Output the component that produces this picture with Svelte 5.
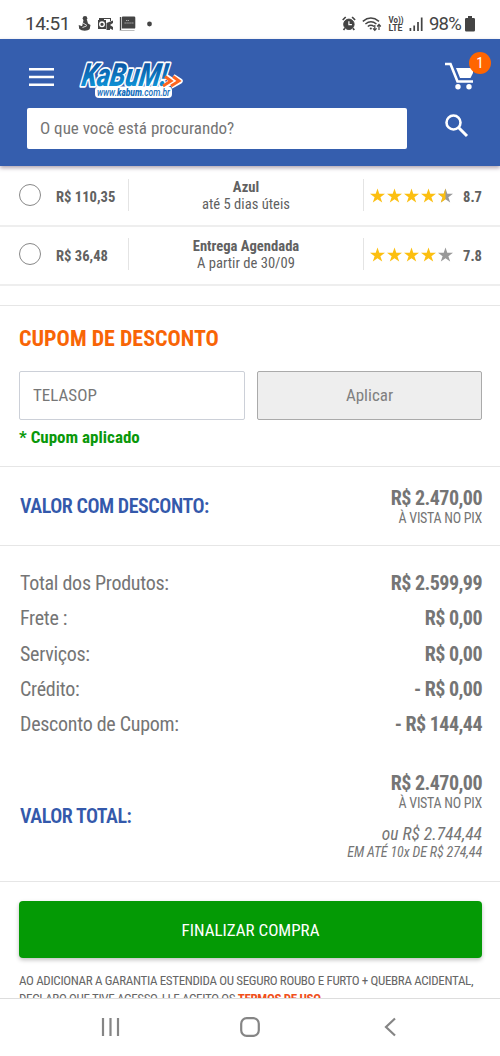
<!-- Carrinho: resumo do pedido no celular -->
<script>
    let search = $state('');
    let coupon = $state('TELASOP');

    // opções de frete visíveis na lista
    const shipping = [
        { price: 'R$ 110,35', name: 'Azul', info: 'até 5 dias úteis', stars: 4.5, score: '8.7' },
        { price: 'R$ 36,48', name: 'Entrega Agendada', info: 'A partir de 30/09', stars: 4, score: '7.8' }
    ];

    const totals = [
        { label: 'Total dos Produtos:', value: 'R$ 2.599,99' },
        { label: 'Frete :', value: 'R$ 0,00' },
        { label: 'Serviços:', value: 'R$ 0,00' },
        { label: 'Crédito:', value: '- R$ 0,00' },
        { label: 'Desconto de Cupom:', value: '- R$ 144,44' }
    ];

    const star = 'M8 0l1.9 5.7H16l-4.9 3.6L13 15l-5-3.6L3 15l1.9-5.7L0 5.7h6.1z';
</script>

<div class="screen">
    <div class="status">
        <span class="clock">14:51</span>
        <svg class="s-left" width="76" height="18" viewBox="0 0 76 18" fill="#444">
            <circle cx="7" cy="3.2" r="2.3" />
            <path d="M5.5 5H9l1 3.500 2.500 1.500-.8 4c-2 2.300-8 2.400-10.500-.2L.7 10l3.400 1.300z" />
            <path d="M5 8l4 2.500M4.500 12.500l4-1.500" stroke="#fff" stroke-width=".8" />
            <path d="M21 3h12v3h-1V4h-6v1h-5zM20 5h8v9h-8z" />
            <circle cx="24" cy="9.300" r="2.300" fill="none" stroke="#fff" stroke-width="1.300" />
            <path d="M28.500 8l6.500-2.500V8l-3 2 3 2v3l-3-1.500V15h-3.500z" />
            <path d="M42.500 2v14" stroke="#444" stroke-width="1.300" />
            <path d="M45 1.500h11q1.300 0 1.300 1.300v9.600q0 1.200-1.300 1.200H43.800V2.700q0-1.200 1.200-1.200z" />
            <path d="M42 15.500h14.500" stroke="#bbb" stroke-width="1" />
            <path d="M48 5.500h3M46.500 8h9" stroke="#aaa" stroke-width="1" stroke-dasharray="1.400 .5" />
            <circle cx="71.500" cy="9" r="2.400" />
        </svg>
        <svg class="s-right" width="82" height="18" viewBox="0 0 82 18" fill="none" stroke="#444">
            <circle cx="6.900" cy="9.300" r="5.200" fill="#444" />
            <path d="M6.900 6.300v3.400h3" stroke="#fff" stroke-width="1.200" />
            <path d="M.7 5L3.700 2M10.100 2l3 3M2.900 13.200L1.500 15M10.900 13.200l1.400 1.800" stroke-width="1.700" />
            <path d="M20.800 6.300q8-6.500 16.200 0M23.400 9q5.600-4.400 11 0M25.800 11.500q3.100-2.500 6.200 0" stroke-width="1.500" />
            <circle cx="28.800" cy="13.500" r="1.100" fill="#444" stroke="none" />
            <path d="M32.800 10v5M31 13.300l1.800 2 1.800-2M37 15v-5M35.200 11.500l1.800-2 1.800 2" stroke-width="1.200" />
            <g class="volte">
                <text x="46.500" y="7.500" textLength="15" lengthAdjust="spacingAndGlyphs">Vo))</text>
                <text x="46.500" y="16" textLength="14" lengthAdjust="spacingAndGlyphs">LTE</text>
            </g>
            <path d="M68.400 13v3M72.200 10.500V16M76 7v9M79.700 2.500V16" stroke-width="1.700" />
        </svg>
        <span class="percent">98%</span>
        <svg class="batt" width="10" height="16" viewBox="0 0 10 16" fill="#444">
            <path d="M3 0h4v2h1.700Q10 2 10 3.300v10.900q0 1.300-1.300 1.300H1.300Q0 15.500 0 14.200V3.300Q0 2 1.300 2H3z" />
        </svg>
    </div>

    <header>
        <div class="brand">
            <button class="icon" aria-label="Menu">
                <svg width="25" height="20" viewBox="0 0 25 20" stroke="#fff" stroke-width="2.600">
                    <path d="M0 2.300h25M0 10h25M0 17.700h25" />
                </svg>
            </button>
            <svg class="logo" width="108" height="42" viewBox="0 0 108 42">
                <defs>
                    <linearGradient id="ink" x1="0" y1="0" x2="0" y2="1">
                        <stop offset="0.2" stop-color="#0a55a4" />
                        <stop offset="0.9" stop-color="#109bdd" />
                    </linearGradient>
                </defs>
                <rect x="17" y="28.500" width="77" height="11.500" rx="4" fill="#fff" />
                <path d="M88 18.500l7 4.500-9 5M95 18.500l7 4.500-9 5" fill="none" stroke="#fff" stroke-width="5.500" stroke-linejoin="round" />
                <text class="wordmark" transform="skewX(-9)" x="7" y="27.500" textLength="85" lengthAdjust="spacingAndGlyphs" fill="url(#ink)">KaBuM!</text>
                <path d="M87 18.500l6 4.500-8 5M95 18.500l6 4.500-8 5" fill="none" stroke="#ff641e" stroke-width="3" />
                <text class="site" x="19" y="37.500" textLength="73" lengthAdjust="spacingAndGlyphs">www.<tspan font-weight="900">kabum</tspan>.com.br</text>
            </svg>
            <button class="icon cart" aria-label="Carrinho">
                <svg width="29" height="28" viewBox="0 0 29 28" fill="#fff">
                    <path d="M0 2h5.500l7 17.500H28" fill="none" stroke="#fff" stroke-width="2.600" />
                    <path d="M11 6h17v5l-2.500 5H15z" />
                    <circle cx="13" cy="24.800" r="2.700" />
                    <circle cx="24" cy="24.800" r="2.700" />
                </svg>
                <span class="badge">1</span>
            </button>
        </div>
        <div class="search">
            <input placeholder="O que você está procurando?" bind:value={search} />
            <button class="icon" aria-label="Buscar">
                <svg width="24" height="24" viewBox="0 0 24 24" fill="none" stroke="#fff" stroke-width="2.600">
                    <circle cx="8.500" cy="8.500" r="7" />
                    <path d="M13.500 13.500l8.500 8.500" stroke-width="3" />
                </svg>
            </button>
        </div>
    </header>

    <main>
        {#each shipping as option}
            <label class="option">
                <input type="radio" name="frete" />
                <b class="price">{option.price}</b>
                <span class="carrier"><b>{option.name}</b><br />{option.info}</span>
                <span class="stars">
                    {#each Array(5) as _, i}
                        <svg width="15" height="15" viewBox="0 0 16 15">
                            <path d={star} fill={i < Math.floor(option.stars) ? '#fcbf10' : '#999'} />
                            {#if option.stars - i === 0.5}
                                <path d="M8 0v11.400L3 15l1.900-5.700L0 5.700h6.100z" fill="#fcbf10" />
                            {/if}
                        </svg>
                    {/each}
                </span>
                <b class="score">{option.score}</b>
            </label>
        {/each}

        <section class="coupon">
            <h2>CUPOM DE DESCONTO</h2>
            <div class="fields">
                <input bind:value={coupon} />
                <button>Aplicar</button>
            </div>
            <p class="applied">* Cupom aplicado</p>
        </section>

        <section class="discount">
            <h3>VALOR COM DESCONTO:</h3>
            <div class="amount">
                <b>R$ 2.470,00</b>
                <small>À VISTA NO PIX</small>
            </div>
        </section>

        <section class="summary">
            {#each totals as row}
                <div class="row"><span>{row.label}</span><b>{row.value}</b></div>
            {/each}
            <div class="grand">
                <h3>VALOR TOTAL:</h3>
                <div class="amount">
                    <b>R$ 2.470,00</b>
                    <small>À VISTA NO PIX</small>
                    <i class="or">ou R$ 2.744,44</i>
                    <i class="parts">EM ATÉ 10x DE R$ 274,44</i>
                </div>
            </div>
        </section>

        <section class="checkout">
            <button>FINALIZAR COMPRA</button>
            <p>AO ADICIONAR A GARANTIA ESTENDIDA OU SEGURO ROUBO E FURTO + QUEBRA ACIDENTAL,<br />DECLARO QUE TIVE ACESSO, LI E ACEITO OS <b>TERMOS DE USO</b></p>
        </section>
    </main>

    <!-- barra de navegação do Android -->
    <nav>
        <svg width="20" height="20" viewBox="0 0 20 20"><path d="M3 1v18M10.500 1v18M18 1v18" /></svg>
        <svg width="20" height="20" viewBox="0 0 20 20"><rect x="1.200" y="1.200" width="17.600" height="17.600" rx="5.500" /></svg>
        <svg width="20" height="20" viewBox="0 0 20 20"><path d="M15 1.500L6 10l9 8.500" /></svg>
    </nav>
</div>

<style>
:global(body) { margin: 0; }
* { box-sizing: border-box; }
.screen {
    width: 500px; height: 1056px; overflow: hidden;
    display: flex; flex-direction: column; background: #fff;
    font-family: "Roboto Condensed", Roboto, sans-serif; font-stretch: 75%;
    color: #757575;
}
button, input { font: inherit; font-stretch: inherit; color: inherit; margin: 0; }
h2, h3, p { margin: 0; }
svg { display: block; flex: none; }

/* barra de status */
.status {
    flex: none; height: 39px; padding: 8px 0 0 25px;
    display: flex; align-items: flex-start;
    font-family: Roboto, sans-serif; font-stretch: normal; color: #444;
}
.clock { width: 53px; font-size: 19px; line-height: 32px; letter-spacing: -.5px; }
.s-left { margin-top: 7px; }
.s-right { margin: 7px 0 0 188px; }
.volte { fill: #444; stroke: none; font-size: 9px; font-weight: 700; }
.percent { width: 36px; margin-left: 5px; font-size: 18.5px; line-height: 32px; letter-spacing: -.8px; }
.batt { margin-top: 8px; }

header {
    flex: none; height: 127px; background: #355eae; position: relative;
    padding: 17px 23px 0 27px; box-shadow: 0 2px 4px rgba(60, 30, 60, .4);
}
.icon { border: 0; padding: 0; background: none; }
.brand { display: flex; height: 52px; }
.brand > .icon { align-self: flex-start; margin: 11px 0 0 2px; }
.logo { margin: 2px 0 0 24px; }
/* contorno branco por baixo das letras */
.wordmark {
    font: italic 900 32px Roboto, sans-serif;
    stroke: #fff; stroke-width: 3.6px; stroke-linejoin: round; paint-order: stroke;
}
.site { font: italic 500 10px Roboto, sans-serif; fill: #1670bd; }
.brand > .cart { position: relative; margin: 6px 0 0 auto; padding-right: 3px; }
.badge {
    position: absolute; top: -10px; right: -14px;
    width: 22px; height: 22px; border-radius: 50%;
    background: #ff6500; color: #fff; font-size: 15px; line-height: 22px;
}
.search { display: flex; align-items: flex-start; }
.search input {
    width: 380px; height: 41px; padding: 0 13px 1px;
    border: 0; border-radius: 2px; background: #fff; font-size: 17px;
}
.search input::placeholder { color: #757575; opacity: 1; }
.search .icon { margin: 6px 0 0 38px; }

main { flex: 1; min-height: 0; overflow: hidden; }
.option {
    height: 58.5px; padding: 0 18px 2px 19px;
    display: flex; align-items: center;
    border-bottom: 2px solid #eee; font-size: 14.6px; color: #616161;
}
.option:first-child { height: 61px; padding-top: 1px; }
.option input {
    appearance: none; width: 22px; height: 22px; flex: none;
    border: 1px solid #888; border-radius: 50%; background: #fff;
}
.price { width: 73px; margin-left: 15px; padding-top: 4px; white-space: nowrap; }
.carrier {
    width: 236px; height: 32px; line-height: 17px; text-align: center;
    border: solid #e4e4e4; border-width: 0 1px;
    display: block; margin-left: -1px;
}
.stars { display: flex; gap: 2px; margin-left: 6px; }
.score { margin-left: auto; padding-top: 4px; }

.coupon { margin-top: 19.5px; height: 162px; border-top: 1px solid #e6e6e6; border-bottom: 1px solid #e6e6e6; padding: 18.5px 18px 0 19px; }
h2 { font-size: 22px; line-height: 27px; color: #f86506; }
.fields { display: flex; gap: 12px; margin-top: 19px; }
.fields > * { height: 49px; border-radius: 2px; font-size: 17px; }
.fields input { width: 226px; padding: 0 13px; border: 1px solid #ccd0d8; color: #777; }
.fields button { flex: 1; background: #eee; border: 1px solid #aaa; color: #808080; }
.applied { margin-top: 6px; font-size: 17px; line-height: 22px; font-weight: 700; color: #0a980a; }

.discount {
    display: flex; justify-content: space-between;
    height: 79px; padding: 20px 18px 0 20px; border-bottom: 1px solid #e6e6e6;
}
h3 { font-size: 20px; line-height: 24px; font-weight: 600; color: #3459ab; margin-top: 7px; letter-spacing: -.45px; }
.amount { display: flex; flex-direction: column; align-items: flex-end; }
.amount b, .row b { font-size: 20px; letter-spacing: -.53px; }
.amount b { line-height: 22px; }
.amount small { font-size: 14px; line-height: 18px; letter-spacing: -.28px; }

.summary { padding: 20px 18px 0 20px; height: 336px; border-bottom: 1px solid #e6e6e6; }
.row { display: flex; justify-content: space-between; font-size: 20px; line-height: 35.3px; letter-spacing: -.28px; }
.grand { display: flex; justify-content: space-between; margin-top: 29.5px; }
.grand h3 { margin-top: 32.5px; }
.or { font-size: 17.5px; line-height: 20px; margin-top: 12px; }
.parts { font-size: 14px; line-height: 17px; letter-spacing: -.13px; }

.checkout { padding: 19.4px 18px 0 19px; }
.checkout button {
    width: 100%; height: 57px; border: 0; border-radius: 4px;
    background: #049a05; color: #fff; font-size: 17px;
    box-shadow: 0 2px 4px rgba(0, 0, 0, .25);
}
.checkout p { margin-top: 14px; font-size: 13px; line-height: 18px; letter-spacing: -.34px; white-space: nowrap; color: #666; }
.checkout p b { color: #f0501c; }

nav {
    flex: none; height: 58px; display: flex; justify-content: center; gap: 120px;
    padding-top: 18px; border-top: 1px solid #ddd; background: #fff;
}
nav svg { fill: none; stroke: #858585; stroke-width: 2.2; }
</style>
